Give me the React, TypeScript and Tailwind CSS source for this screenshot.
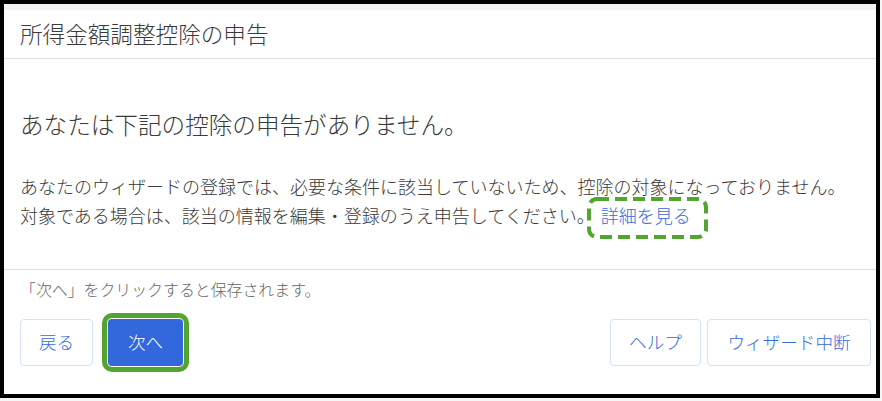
export default function App() {
  const font = {
    fontFamily: '"Noto Sans CJK JP", "Noto Sans", sans-serif',
  };

  return (
    <div className="w-[882px] h-[401px] bg-[#f7f7f7] font-light" style={font}>
      <div className="w-[880px] h-[398px] border-4 border-black bg-white flex flex-col">
        {/* top strip */}
        <div className="h-[6px] bg-[#f2f2f2]" />

        {/* header */}
        <div className="h-[49px] border-b border-[#dedede] flex items-center pl-4">
          <h1 className="text-[22.6px] leading-none text-[#3a3a3a]">
            所得金額調整控除の申告
          </h1>
        </div>

        {/* body */}
        <div className="h-[211px] border-b border-[#dedede] pl-4 pt-[49px]">
          <h2 className="text-[23.6px] leading-[32px] text-[#3a3a3a]">
            あなたは下記の控除の申告がありません。
          </h2>
          <p className="mt-[32px] text-[18px] leading-[29px] text-[#3a3a3a] whitespace-nowrap">
            あなたのウィザードの登録では、必要な条件に該当していないため、控除の対象になっておりません。
            <br />
            対象である場合は、該当の情報を編集・登録のうえ申告してください。
            <span className="relative inline-block ml-[-8px] px-[14px] text-[#3a6ad8]">
              詳細を見る
              <svg
                className="absolute left-0 top-[-4px] pointer-events-none"
                width="121"
                height="42"
                viewBox="0 0 121 42"
              >
                <rect
                  x="2"
                  y="2"
                  width="117"
                  height="38"
                  rx="8"
                  fill="none"
                  stroke="#52a52e"
                  strokeWidth="4"
                  strokeDasharray="12 6"
                />
              </svg>
            </span>
          </p>
        </div>

        {/* footer */}
        <div className="flex-1 pl-4 pr-[5px] pt-[10px]">
          <p className="text-[15.9px] leading-[20px] text-[#666666]">
            「次へ」をクリックすると保存されます。
          </p>
          <div className="mt-[19px] flex items-center">
            <button className="h-[47px] w-[73px] rounded-[4px] border border-[#d5e1f6] bg-white text-[17.6px] text-[#3a6ad8]">
              戻る
            </button>
            <button className="ml-[15px] h-[47px] w-[75px] rounded-[4px] bg-[#3367dc] text-[17.6px] text-white outline-[5px] outline-solid outline-[#52a52e] outline-offset-[1px]">
              次へ
            </button>
            <div className="ml-auto flex gap-[6px]">
              <button className="h-[47px] w-[91px] rounded-[4px] border border-[#d5e1f6] bg-white text-[17.6px] text-[#3a6ad8]">
                ヘルプ
              </button>
              <button className="h-[47px] w-[164px] rounded-[4px] border border-[#d5e1f6] bg-white text-[17.6px] text-[#3a6ad8]">
                ウィザード中断
              </button>
            </div>
          </div>
        </div>
      </div>
    </div>
  );
}
